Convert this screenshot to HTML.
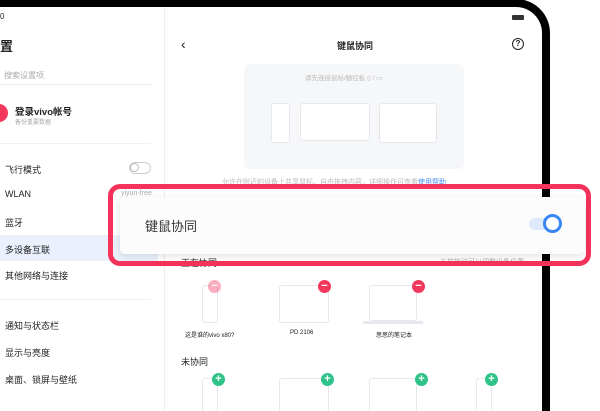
<!DOCTYPE html>
<html style="overflow:hidden;width:600px;height:411px"><head><meta charset="utf-8"><style>
*{margin:0;padding:0;box-sizing:border-box}
body{width:600px;height:411px;overflow:hidden;background:#fff;font-family:"Liberation Sans","Noto Sans CJK SC",sans-serif;position:relative;color:#222}
.a{position:absolute}
.wrap{position:absolute;left:0;top:0;width:600px;height:411px;overflow:hidden}
.frame{left:-40px;top:-1px;width:590px;height:412px;border:8px solid #000;border-bottom:none;border-radius:34px 34px 0 0;background:#fff}
.t{font-size:9px;color:#222}
.g{color:#aaa}
.dev{border:1.5px solid #e6e8ee;border-radius:3px;background:#fff}
.dv{border-bottom:none;border-radius:3px 3px 0 0}
.minus,.plus{width:13px;height:13px;border-radius:50%;color:#fff;font-size:11px;line-height:12px;text-align:center;font-weight:bold}
.minus{background:#f3385e}.plus{background:#2fc38a}
</style></head><body><div class="wrap">
<div class="a frame"></div>
<div class="a t" style="left:0;top:12px;font-size:8px">0</div>
<div class="a" style="left:512px;top:15px;width:12px;height:5px;background:#333;border-radius:1px"></div>
<div class="a" style="left:164px;top:8px;width:1px;height:403px;background:#eee"></div>
<div class="a" style="left:0;top:36px;font-size:13px;font-weight:bold">置</div>
<div class="a g" style="left:4px;top:70px;font-size:8px">搜索设置项</div>
<div class="a" style="left:0;top:84px;width:151px;height:1px;background:#e8e8ee"></div>
<div class="a" style="left:-10px;top:104px;width:18px;height:18px;border-radius:50%;background:#f3385e"></div>
<div class="a" style="left:15px;top:104px;font-size:9.5px;font-weight:bold">登录vivo帐号</div>
<div class="a g" style="left:15px;top:117px;font-size:6px">备份重要数据</div>
<div class="a" style="left:0;top:143px;width:151px;height:1px;background:#f0f0f0"></div>
<div class="a t" style="left:5px;top:163px">飞行模式</div>
<div class="a" style="left:129px;top:162px;width:22px;height:12px;border:1.5px solid #ccc;border-radius:6px"><div style="width:9px;height:9px;border:1.5px solid #bbb;border-radius:50%;margin:0"></div></div>
<div class="a t" style="left:5px;top:189px">WLAN</div>
<div class="a g" style="left:121px;top:190px;font-size:7px">yiyun-free</div>
<div class="a t" style="left:5px;top:216px">蓝牙</div>
<div class="a" style="left:0;top:235px;width:158px;height:26px;background:#eaf1fd"></div>
<div class="a t" style="left:5px;top:243px">多设备互联</div>
<div class="a t" style="left:5px;top:269px">其他网络与连接</div>
<div class="a" style="left:0;top:299px;width:151px;height:1px;background:#f0f0f0"></div>
<div class="a t" style="left:5px;top:319px">通知与状态栏</div>
<div class="a t" style="left:5px;top:346px">显示与亮度</div>
<div class="a t" style="left:5px;top:373px">桌面、锁屏与壁纸</div>
<div class="a" style="left:181px;top:36px;font-size:14px">‹</div>
<div class="a" style="left:337px;top:39px;font-size:9px;font-weight:bold">键鼠协同</div>
<div class="a" style="left:512px;top:38px;width:12px;height:12px;border:1.5px solid #222;border-radius:50%;font-size:8px;text-align:center;line-height:10px;font-weight:bold">?</div>
<div class="a" style="left:244px;top:64px;width:220px;height:105px;background:#f6f7f9;border-radius:6px"></div>
<div class="a" style="left:305px;top:72px;font-size:6.5px;color:#bbb">请先连接鼠标/触控板 ▯ / ▭</div>
<div class="a dev" style="left:271px;top:103px;width:19px;height:40px"></div>
<div class="a dev" style="left:300px;top:103px;width:70px;height:38px"></div>
<div class="a dev" style="left:379px;top:103px;width:58px;height:40px"></div>
<div class="a" style="left:222px;top:177px;font-size:7px;color:#bbb">允许在附近的设备上共享鼠标，自由拖拽内容，详细操作可查看<span style="color:#4a8cf7">使用帮助</span></div>
<div class="a" style="left:181px;top:256px;font-size:9px">正在协同</div>
<div class="a g" style="left:440px;top:257px;font-size:7px">长按拖动可以调整设备位置</div>
<div class="a dev" style="left:202px;top:285px;width:16px;height:38px"></div>
<div class="a minus" style="left:208px;top:280px;opacity:.4">−</div>
<div class="a dev" style="left:279px;top:285px;width:50px;height:38px"></div>
<div class="a minus" style="left:318px;top:280px">−</div>
<div class="a dev" style="left:369px;top:285px;width:48px;height:36px"></div>
<div class="a" style="left:363px;top:321px;width:60px;height:3px;background:#e6e8ee"></div>
<div class="a minus" style="left:412px;top:280px">−</div>
<div class="a" style="left:185px;top:330px;font-size:6px">这是谁的vivo x80?</div>
<div class="a" style="left:290px;top:330px;font-size:6px">PD 2106</div>
<div class="a" style="left:376px;top:330px;font-size:6px">思思的笔记本</div>
<div class="a" style="left:181px;top:355px;font-size:9px">未协同</div>
<div class="a dev dv" style="left:202px;top:378px;width:16px;height:33px"></div>
<div class="a plus" style="left:212px;top:373px">+</div>
<div class="a dev dv" style="left:279px;top:378px;width:50px;height:33px"></div>
<div class="a plus" style="left:321px;top:373px">+</div>
<div class="a dev dv" style="left:369px;top:378px;width:48px;height:33px"></div>
<div class="a plus" style="left:415px;top:373px">+</div>
<div class="a dev dv" style="left:476px;top:378px;width:16px;height:33px"></div>
<div class="a plus" style="left:485px;top:373px">+</div>
<div class="a" style="left:108px;top:184px;width:483px;height:82px;border:5px solid #f5325a;border-radius:12px"></div>
<div class="a" style="left:120px;top:197px;width:465px;height:57px;background:#fcfcfd;border-radius:5px;box-shadow:0 2px 8px rgba(0,0,0,.12)"></div>
<div class="a" style="left:145px;top:216px;font-size:13px;color:#333">键鼠协同</div>
<div class="a" style="left:529px;top:218px;width:28px;height:12px;border-radius:6px;background:#dde9fc"></div>
<div class="a" style="left:543px;top:214px;width:19px;height:19px;border-radius:50%;border:3px solid #3a86f7;background:#fff"></div>
</div></body></html>
